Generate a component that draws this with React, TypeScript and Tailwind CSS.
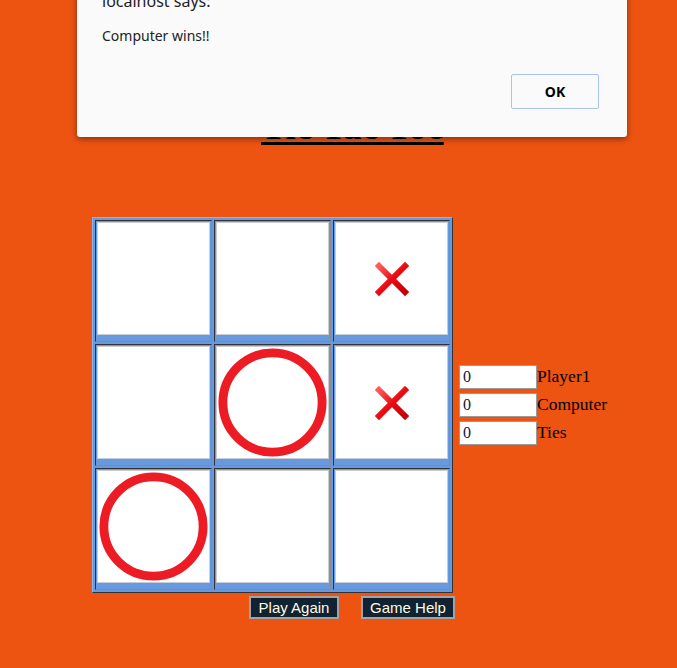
import React from "react";

type Mark = "" | "X" | "O";

const board: Mark[] = ["", "", "X", "", "O", "X", "O", "", ""];

function Cross() {
  return (
    <svg width="34" height="34" viewBox="0 0 34 34">
      <defs>
        <linearGradient id="xg" x1="0" y1="0" x2="1" y2="1">
          <stop offset="0" stopColor="#ff5a5a" />
          <stop offset="0.5" stopColor="#e80c12" />
          <stop offset="1" stopColor="#c40008" />
        </linearGradient>
      </defs>
      <path d="M4 4 L30 30 M30 4 L4 30" stroke="url(#xg)" strokeWidth="6" strokeLinecap="square" />
    </svg>
  );
}

function Circle() {
  return (
    <svg width="113" height="113" viewBox="0 0 113 113">
      <circle cx="56.5" cy="56.5" r="50.5" fill="none" stroke="#ed1c24" strokeWidth="9" />
    </svg>
  );
}

function Cell({ mark }: { mark: Mark }) {
  return (
    <div className="w-[117px] h-[122px] p-px bg-[#6699dd] border border-t-[#333] border-l-[#333] border-r-[#8a8a8a] border-b-[#8a8a8a]">
      <div className="w-[113px] h-[113px] bg-white border border-[#c8ccd6] flex items-center justify-center overflow-hidden">
        {mark === "X" && <Cross />}
        {mark === "O" && <Circle />}
      </div>
    </div>
  );
}

function ScoreRow({ label }: { label: string }) {
  return (
    <div className="flex items-center h-[24px]">
      <input
        readOnly
        value="0"
        className="w-[78px] h-[24px] bg-white border border-[#9a9a9a] pl-[3px] text-[16px] text-[#0a1a40] outline-none"
        style={{ fontFamily: '"Liberation Serif", serif' }}
      />
      <span className="text-[17.5px] text-black leading-none">{label}</span>
    </div>
  );
}

export default function App() {
  return (
    <div
      className="relative w-full min-h-[668px] bg-[#ed5412] overflow-hidden"
      style={{ fontFamily: '"Liberation Serif", "Times New Roman", serif' }}
    >
      {/* Title */}
      <div className="pt-[105px] pl-[261px]">
        <h1 className="text-[37.5px] leading-[44px] font-bold text-black underline decoration-[3px] underline-offset-[3px]">
          Tic Tac Toe
        </h1>
      </div>

      {/* Board + scores */}
      <div className="mt-[68px] ml-[92px] flex items-center gap-[6px]">
        <div className="grid grid-cols-3 gap-[2px] p-[2px] bg-[#6699dd] border border-t-[#8fb3e8] border-l-[#8fb3e8] border-r-[#333] border-b-[#333] w-fit">
          {board.map((m, i) => (
            <Cell key={i} mark={m} />
          ))}
        </div>
        <div className="flex flex-col gap-[4px]">
          <ScoreRow label="Player1" />
          <ScoreRow label="Computer" />
          <ScoreRow label="Ties" />
        </div>
      </div>

      {/* Buttons */}
      <div
        className="mt-[3px] ml-[249px] flex gap-[22px]"
        style={{ fontFamily: '"Liberation Sans", Arial, sans-serif' }}
      >
        <button className="w-[90px] h-[23px] flex items-center justify-center bg-[#112233] text-[#fffbe0] text-[15px] leading-none border-2 border-[#a3a3a3]">
          Play Again
        </button>
        <button className="w-[94px] h-[23px] flex items-center justify-center bg-[#112233] text-[#fffbe0] text-[15px] leading-none border-2 border-[#a3a3a3]">
          Game Help
        </button>
      </div>

      {/* Alert dialog */}
      <div
        className="absolute left-[77px] top-[-34px] w-[550px] h-[171px] bg-[#fafafa] rounded-[3px] shadow-[0_2px_6px_rgba(0,0,0,0.45)] pt-[25px] px-[25px]"
        style={{ fontFamily: '"Noto Sans", "Open Sans", sans-serif' }}
      >
        <div className="text-[16px] leading-[20px] text-[#222]">localhost says:</div>
        <div className="mt-[16px] text-[14px] leading-[18px] text-[#222]">Computer wins!!</div>
        <div className="mt-[29px] flex justify-end pr-[3px]">
          <button className="w-[88px] h-[35px] bg-[#fafafa] border border-[#a9c4f0] rounded-[2px] text-[14px] font-bold text-black">
            OK
          </button>
        </div>
      </div>
    </div>
  );
}
